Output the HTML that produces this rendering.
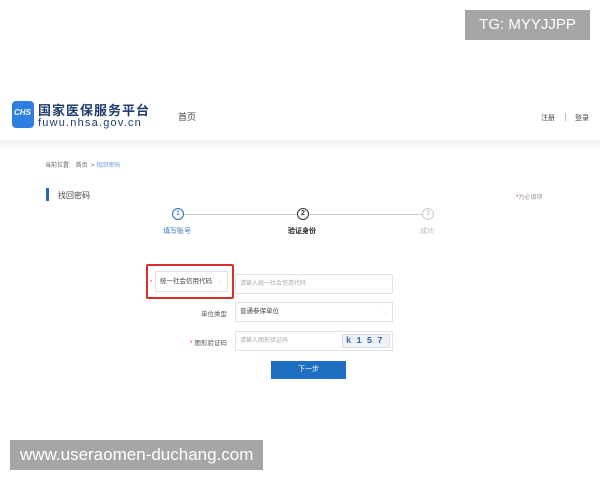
<!DOCTYPE html>
<html><head><meta charset="utf-8"><style>
*{margin:0;padding:0;box-sizing:border-box}
body{width:600px;height:480px;background:#fff;position:relative;overflow:hidden;font-family:"Liberation Sans","Noto Sans CJK SC",sans-serif;color:#555}
.a{position:absolute;white-space:nowrap}
.s{font-size:7px}
</style></head><body>
<div class="a" style="left:465px;top:10px;width:125px;height:30px;background:#a6a6a6;color:#fff;font-size:15px;line-height:30px;text-align:center">TG: MYYJJPP</div>

<div class="a" style="left:12px;top:101px;width:22px;height:27px;background:#2f7ee0;border-radius:4px"></div>
<div class="a" style="left:14px;top:108px;color:#fff;font-size:8px;font-weight:bold;font-style:italic">CHS</div>
<div class="a" style="left:38px;top:100px;font-size:13px;font-weight:bold;color:#1f3c6e;letter-spacing:1px">国家医保服务平台</div>
<div class="a" style="left:38px;top:117px;font-size:11px;color:#1f3c6e;letter-spacing:1.2px">fuwu.nhsa.gov.cn</div>
<div class="a" style="left:178px;top:110px;font-size:9px;color:#444">首页</div>
<div class="a s" style="left:541px;top:113px;color:#444">注册</div>
<div class="a" style="left:565px;top:113px;width:1px;height:8px;background:#bbb"></div>
<div class="a s" style="left:575px;top:113px;color:#444">登录</div>
<div class="a" style="left:0;top:140px;width:600px;height:8px;background:linear-gradient(#f2f2f2,#fafafa)"></div>

<div class="a" style="left:45px;top:160px;font-size:6px;color:#666">当前位置:&nbsp;&nbsp;&nbsp;首页&nbsp;&nbsp;&gt;&nbsp;<span style="color:#6a9fd8">找回密码</span></div>
<div class="a" style="left:46px;top:188px;width:3px;height:13px;background:#2568b8"></div>
<div class="a" style="left:58px;top:190px;font-size:8px;color:#444">找回密码</div>
<div class="a s" style="left:516px;top:192px;color:#999;font-size:6px"><span style="color:#d33">*</span>为必填项</div>

<div class="a" style="left:183px;top:214px;width:115px;height:1px;background:#ccc"></div>
<div class="a" style="left:308px;top:214px;width:115px;height:1px;background:#ccc"></div>
<div class="a" style="left:172px;top:208px;width:12px;height:12px;border:1px solid #2568b8;border-radius:50%;font-size:7px;line-height:10px;text-align:center;color:#2568b8">1</div>
<div class="a" style="left:297px;top:208px;width:12px;height:12px;border:1px solid #333;border-radius:50%;font-size:7px;line-height:10px;text-align:center;color:#333;font-weight:bold">2</div>
<div class="a" style="left:422px;top:208px;width:12px;height:12px;border:1px solid #ccc;border-radius:50%;font-size:7px;line-height:10px;text-align:center;color:#bbb">3</div>
<div class="a s" style="left:163px;top:226px;color:#3b78c0">填写账号</div>
<div class="a s" style="left:288px;top:226px;color:#222;font-weight:bold">验证身份</div>
<div class="a s" style="left:420px;top:226px;color:#bbb">成功</div>

<div class="a" style="left:146px;top:264px;width:88px;height:35px;border:2px solid #d9302c;border-radius:2px"></div>
<div class="a" style="left:150px;top:280px;font-size:6px;color:#d33">*</div>
<div class="a" style="left:155px;top:271px;width:73px;height:21px;border:1px solid #e3e3e3;font-size:6.5px;line-height:19px;padding-left:4px;color:#444">统一社会信用代码 <span style="color:#bbb;margin-left:4px">⌵</span></div>
<div class="a" style="left:235px;top:274px;width:158px;height:20px;border:1px solid #e3e3e3;font-size:6px;line-height:18px;padding-left:4px;color:#aaa">请输入统一社会信用代码</div>

<div class="a" style="left:201px;top:308px;font-size:6.5px;color:#555">单位类型</div>
<div class="a" style="left:235px;top:302px;width:158px;height:20px;border:1px solid #e3e3e3;font-size:6.5px;line-height:18px;padding-left:4px;color:#444">普通参保单位<span style="position:absolute;right:5px;color:#bbb">⌵</span></div>

<div class="a" style="left:190px;top:337px;font-size:6.5px;color:#555"><span style="color:#d33">*</span> 图形验证码</div>
<div class="a" style="left:235px;top:331px;width:158px;height:20px;border:1px solid #e3e3e3;font-size:6px;line-height:18px;padding-left:4px;color:#aaa">请输入图形验证码</div>
<div class="a" style="left:342px;top:334px;width:48px;height:14px;background:#eef3f7;border:1px solid #dde;font-size:9px;font-weight:bold;color:#3a6a9a;letter-spacing:5px;line-height:12px;padding-left:3px;font-family:'Liberation Mono',monospace">k157</div>

<div class="a" style="left:271px;top:361px;width:75px;height:18px;background:#1e6fc2;color:#fff;font-size:7px;line-height:18px;text-align:center">下一步</div>

<div class="a" style="left:10px;top:440px;width:253px;height:30px;background:#a6a6a6;color:#fff;font-size:17px;line-height:30px;padding-left:10px">www.useraomen-duchang.com</div>
</body></html>
